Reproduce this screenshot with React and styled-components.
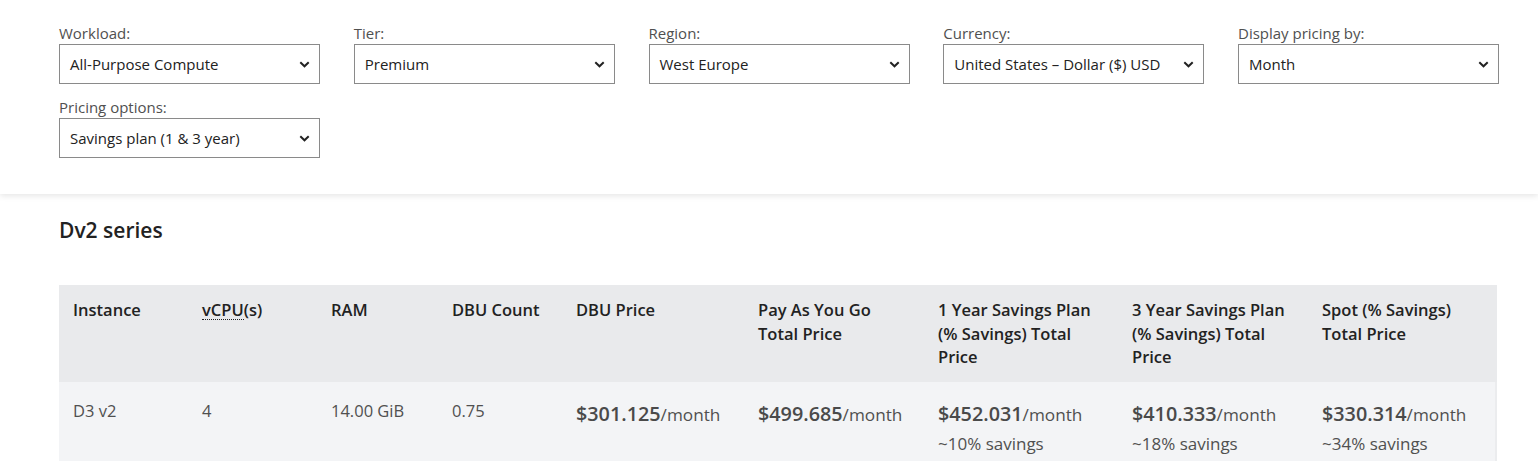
import React from "react";
import styled, { createGlobalStyle } from "styled-components";

const Global = createGlobalStyle`
  html, body { margin: 0; padding: 0; background: #fff; }
  body { font-family: "Open Sans", "Noto Sans", sans-serif; color: #505050; }
  * { box-sizing: border-box; }
`;

const FilterPanel = styled.div`
  background: #fff;
  padding: 23px 39px 36px 59px;
  box-shadow: 0 2px 6px rgba(0,0,0,0.10);
  position: relative;
  z-index: 1;
`;

const FilterGrid = styled.div`
  display: grid;
  grid-template-columns: repeat(5, 261px);
  column-gap: 33.75px;
  row-gap: 13px;
`;

const Field = styled.div`
  display: flex;
  flex-direction: column;
`;

const Label = styled.label`
  font-size: 15px;
  line-height: 20px;
  color: #505050;
  margin-bottom: 1px;
`;

const SelectBox = styled.div`
  height: 40px;
  border: 1px solid #8a8a8a;
  display: flex;
  align-items: center;
  justify-content: space-between;
  padding: 0 9px 0 10px;
  font-size: 15px;
  color: #222;
  background: #fff;
`;

const Chevron = () => (
  <svg width="11" height="7" viewBox="0 0 11 7">
    <path d="M1.3 1.3 L5.5 5.3 L9.7 1.3" fill="none" stroke="#222" strokeWidth="2" />
  </svg>
);

const Content = styled.div`
  padding: 21px 41px 0 59px;
`;

const Heading = styled.h2`
  margin: 0 0 40px 0;
  font-size: 21px;
  font-weight: 600;
  color: #222;
  line-height: 30px;
`;

const Table = styled.div`
  display: grid;
  grid-template-columns: 129px 129px 121px 124px 182px 180px 194px 190px 189px;
  width: 1438px;
`;

const HeadCell = styled.div`
  background: #e9eaec;
  padding: 13px 14px 0 14px;
  height: 97px;
  font-size: 16.5px;
  font-weight: 600;
  line-height: 23.5px;
  color: #222;
`;

const Abbr = styled.span`
  border-bottom: 1px dotted #222;
  line-height: 18px;
  display: inline-block;
`;

const Cell = styled.div`
  background: #f3f4f6;
  padding: 17px 14px 12px 14px;
  font-size: 16.5px;
  line-height: 24px;
  color: #505050;
  height: 90px;
  ${(p) => (p.$last ? "border-right: 2px solid #ebecee;" : "")}
`;

const PriceLine = styled.div`
  line-height: 28px;
  margin-top: 1px;
  white-space: nowrap;
`;

const Amount = styled.span`
  font-size: 19.8px;
  font-weight: 600;
  color: #4a4a4a;
`;

const Unit = styled.span`
  font-size: 17.2px;
  color: #505050;
`;

const Savings = styled.div`
  font-size: 17px;
  line-height: 29px;
  color: #505050;
`;

const filters = [
  ["Workload:", "All-Purpose Compute"],
  ["Tier:", "Premium"],
  ["Region:", "West Europe"],
  ["Currency:", "United States \u2013 Dollar ($) USD"],
  ["Display pricing by:", "Month"],
  ["Pricing options:", "Savings plan (1 & 3 year)"],
];

const headers = [
  "Instance",
  "vCPU(s)",
  "RAM",
  "DBU Count",
  "DBU Price",
  "Pay As You Go Total Price",
  "1 Year Savings Plan (% Savings) Total Price",
  "3 Year Savings Plan (% Savings) Total Price",
  "Spot (% Savings) Total Price",
];

const prices = [
  ["$301.125", null],
  ["$499.685", null],
  ["$452.031", "~10% savings"],
  ["$410.333", "~18% savings"],
  ["$330.314", "~34% savings"],
];

export default function App() {
  return (
    <>
      <Global />
      <FilterPanel>
        <FilterGrid>
          {filters.map(([l, v]) => (
            <Field key={l}>
              <Label>{l}</Label>
              <SelectBox>
                <span>{v}</span>
                <Chevron />
              </SelectBox>
            </Field>
          ))}
        </FilterGrid>
      </FilterPanel>
      <Content>
        <Heading>Dv2 series</Heading>
        <Table>
          {headers.map((h) => (
            <HeadCell key={h}>
              {h === "vCPU(s)" ? <><Abbr>vCPU</Abbr>(s)</> : h}
            </HeadCell>
          ))}
          <Cell>D3 v2</Cell>
          <Cell>4</Cell>
          <Cell>14.00 GiB</Cell>
          <Cell>0.75</Cell>
          {prices.map(([a, s], i) => (
            <Cell key={a} $last={i === prices.length - 1}>
              <PriceLine>
                <Amount>{a}</Amount>
                <Unit>/month</Unit>
              </PriceLine>
              {s && <Savings>{s}</Savings>}
            </Cell>
          ))}
        </Table>
      </Content>
    </>
  );
}
